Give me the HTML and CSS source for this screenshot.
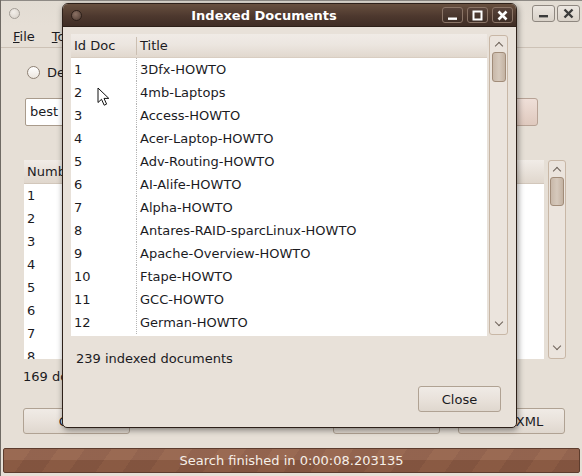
FILE: index.html
```html
<!DOCTYPE html>
<html>
<head>
<meta charset="utf-8">
<link rel="stylesheet" href="styles.css">
</head>
<body>
<div class="bgwin">
  <div class="bg-title">
    <span class="dot dot-light"></span>
    <span class="grow"></span>
    <span class="wbtn wbtn-light"><svg width="11" height="11" viewBox="0 0 11 11"><rect x="1" y="7" width="9" height="2.4" fill="#3b3b3b"/></svg></span>
    <span class="wbtn wbtn-light"><svg width="11" height="11" viewBox="0 0 11 11"><path d="M1.5 1.5 L9.5 9.5 M9.5 1.5 L1.5 9.5" stroke="#3b3b3b" stroke-width="2.4"/></svg></span>
  </div>
  <div class="menubar">
    <span><u>F</u>ile</span>
    <span><u>T</u>ools</span>
  </div>
  <div class="bg-content">
    <div class="radio-row"><span class="radio"></span><span>Default</span></div>
    <div class="entry-row">
      <div class="entry">best configuration</div>
      <div class="pbtn">Search</div>
    </div>
    <div class="bg-list">
      <div class="bg-list-main">
        <div class="bg-head">Number</div>
        <div class="bg-row">1</div>
        <div class="bg-row">2</div>
        <div class="bg-row">3</div>
        <div class="bg-row">4</div>
        <div class="bg-row">5</div>
        <div class="bg-row">6</div>
        <div class="bg-row">7</div>
        <div class="bg-row">8</div>
      </div>
      <div class="sb sb-bg">
        <span class="chev chev-up"></span>
        <span class="thumb thumb-bg"></span>
        <span class="grow"></span>
        <span class="chev chev-down"></span>
      </div>
    </div>
    <div class="bg-label">169 documents found</div>
    <div class="bg-buttons">
      <div class="btn btn-a">Close</div>
      <div class="btn btn-b">Show</div>
      <div class="btn btn-c">Save XML</div>
    </div>
  </div>
  <div class="statusbar">Search finished in 0:00:08.203135</div>

  <div class="dialog">
    <div class="d-title">
      <span class="dot dot-dark"></span>
      <span class="d-title-text">Indexed Documents</span>
      <span class="d-btns">
        <span class="wbtn wbtn-dark"><svg width="11" height="11" viewBox="0 0 11 11"><rect x="1" y="7.5" width="9" height="2.4" fill="#fff"/></svg></span>
        <span class="wbtn wbtn-dark"><svg width="11" height="11" viewBox="0 0 11 11"><rect x="1.5" y="1.5" width="8" height="8" fill="none" stroke="#fff" stroke-width="2"/></svg></span>
        <span class="wbtn wbtn-dark"><svg width="11" height="11" viewBox="0 0 11 11"><path d="M1.5 1.5 L9.5 9.5 M9.5 1.5 L1.5 9.5" stroke="#fff" stroke-width="2.6"/></svg></span>
      </span>
    </div>
    <div class="d-body">
      <div class="tree">
        <div class="tree-main">
          <div class="t-head">
            <div class="c-id">Id Doc</div>
            <div class="c-title">Title</div>
          </div>
          <div class="t-rows">
            <div class="t-row"><div class="c-id">1</div><div class="c-title">3Dfx-HOWTO</div></div>
            <div class="t-row"><div class="c-id">2</div><div class="c-title">4mb-Laptops</div></div>
            <div class="t-row"><div class="c-id">3</div><div class="c-title">Access-HOWTO</div></div>
            <div class="t-row"><div class="c-id">4</div><div class="c-title">Acer-Laptop-HOWTO</div></div>
            <div class="t-row"><div class="c-id">5</div><div class="c-title">Adv-Routing-HOWTO</div></div>
            <div class="t-row"><div class="c-id">6</div><div class="c-title">AI-Alife-HOWTO</div></div>
            <div class="t-row"><div class="c-id">7</div><div class="c-title">Alpha-HOWTO</div></div>
            <div class="t-row"><div class="c-id">8</div><div class="c-title">Antares-RAID-sparcLinux-HOWTO</div></div>
            <div class="t-row"><div class="c-id">9</div><div class="c-title">Apache-Overview-HOWTO</div></div>
            <div class="t-row"><div class="c-id">10</div><div class="c-title">Ftape-HOWTO</div></div>
            <div class="t-row"><div class="c-id">11</div><div class="c-title">GCC-HOWTO</div></div>
            <div class="t-row"><div class="c-id">12</div><div class="c-title">German-HOWTO</div></div>
          </div>
        </div>
        <div class="sb sb-d">
          <span class="chev chev-up"></span>
          <span class="thumb thumb-d"></span>
          <span class="grow"></span>
          <span class="chev chev-down"></span>
        </div>
      </div>
      <div class="d-label">239 indexed documents</div>
      <div class="d-actions"><div class="btn btn-close">Close</div></div>
    </div>
  </div>

  <svg class="cursor" width="14" height="20" viewBox="0 0 14 20"><path d="M1 1 L1 15.5 L4.5 12.3 L7.2 18.2 L9.6 17.1 L7 11.4 L11.8 11.4 Z" fill="#fff" stroke="#111" stroke-width="1" stroke-linejoin="round"/></svg>
</div>
</body>
</html>
```

FILE: styles.css
```css
* { box-sizing: border-box; }
html, body { margin: 0; padding: 0; }
body {
  width: 582px;
  height: 476px;
  overflow: hidden;
  font-family: "DejaVu Sans", "Noto Sans", sans-serif;
  font-size: 13px;
  color: #1b1b1f;
  background: #3a3a3a;
}
.grow { flex: 1; }

.bgwin {
  position: relative;
  width: 582px;
  height: 476px;
  background: #e6dfd6;
  border-left: 1px solid #6f6a64;
  display: flex;
  flex-direction: column;
}

.bg-title {
  height: 26px;
  display: flex;
  align-items: center;
  gap: 2px;
  padding: 0 2px 0 8px;
  background: linear-gradient(#e2dcd3, #e6dfd6);
  border-top: 1px solid #8e8a85;
}
.dot {
  width: 11px;
  height: 11px;
  border-radius: 50%;
  display: inline-block;
}
.dot-light {
  border: 1px solid #a39d96;
  background: radial-gradient(circle at 40% 35%, #f2eee9, #d6cfc6);
}
.dot-dark {
  border: 1px solid #2d201a;
  background: radial-gradient(circle at 40% 35%, #8b7164, #4d3a31);
}
.wbtn {
  width: 23px;
  height: 17px;
  border-radius: 3px;
  display: flex;
  align-items: center;
  justify-content: center;
}
.wbtn-light {
  border: 1px solid #8e8780;
  background: linear-gradient(#ece7e1, #d9d2c9);
}
.wbtn-dark {
  width: 21px;
  height: 16px;
  border: 1px solid #8a7466;
  background: linear-gradient(#58433a, #3f2e26);
}

.menubar {
  height: 22px;
  display: flex;
  align-items: center;
  gap: 17px;
  padding-left: 12px;
  border-bottom: 1px solid #cdc2b6;
}

.bg-content {
  flex: 1;
  display: flex;
  flex-direction: column;
  padding: 0 16px 0 22px;
}
.radio-row {
  margin-top: 15px;
  height: 18px;
  display: flex;
  align-items: center;
  gap: 7px;
  padding-left: 4px;
}
.radio {
  width: 13px;
  height: 13px;
  border-radius: 50%;
  border: 1px solid #8e8174;
  background: linear-gradient(#ffffff, #ece6df);
}
.entry-row {
  margin-top: 17px;
  height: 28px;
  display: flex;
  gap: 8px;
  padding-left: 2px;
}
.entry {
  flex: 1;
  background: #fff;
  border: 1px solid #a99b8c;
  border-radius: 2px;
  padding: 5px 4px;
}
.pbtn {
  width: 98px;
  margin-right: 28px;
  border: 1px solid #b7a295;
  border-radius: 3px;
  background: linear-gradient(#efdfd8, #dfc9be);
  display: flex;
  align-items: center;
  justify-content: center;
}

.bg-list {
  margin-top: 34px;
  height: 199px;
  display: flex;
  gap: 4px;
  padding-left: 1px;
}
.bg-list-main {
  flex: 1;
  background: #fff;
  overflow: hidden;
  margin-right: 0;
}
.bg-head {
  height: 24px;
  padding: 4px 3px;
  background: linear-gradient(#f1ece7, #e0d7cd);
  border-bottom: 1px solid #d2c7bb;
}
.bg-row {
  height: 23px;
  padding: 4px 3px;
}
.sb {
  display: flex;
  flex-direction: column;
  align-items: center;
  border: 1px solid #c8b7a6;
  border-radius: 3px;
  background: #ebe4dd;
}
.sb-bg {
  width: 18px;
  margin-right: 0;
}
.chev {
  width: 6px;
  height: 6px;
  border-left: 1px solid #6d6259;
  border-top: 1px solid #6d6259;
}
.chev-up { transform: rotate(45deg); margin-top: 7px; }
.chev-down { transform: rotate(225deg); margin-bottom: 9px; }
.thumb {
  width: 14px;
  height: 29px;
  margin-top: 3px;
  border: 1px solid #a18c79;
  border-radius: 3px;
  background: linear-gradient(90deg, #c8b8a9, #d6c9bc 50%, #c3b2a2);
}

.bg-label {
  margin-top: 9px;
  height: 18px;
  line-height: 18px;
}
.bg-buttons {
  margin-top: 22px;
  height: 26px;
  display: flex;
}
.btn {
  height: 26px;
  border: 1px solid #b0a293;
  border-radius: 3px;
  background: linear-gradient(#f0ebe6 0%, #e9e2db 50%, #dfd7ce 100%);
  display: flex;
  align-items: center;
  justify-content: center;
}
.btn-a { width: 107px; }
.btn-b { width: 107px; margin-left: 203px; }
.btn-c { width: 107px; margin-left: 18px; }

.statusbar {
  height: 25px;
  margin: 0 2px 3px 2px;
  border: 1px solid #5d3c2d;
  border-radius: 2px;
  color: #f6efe8;
  display: flex;
  align-items: center;
  justify-content: center;
  background:
    linear-gradient(rgba(255,255,255,0.06) 0 50%, rgba(0,0,0,0.07) 50% 100%),
    repeating-linear-gradient(-55deg, #8c5a44 0 22px, #946148 22px 44px);
}

.dialog {
  position: absolute;
  left: 61px;
  top: 3px;
  width: 455px;
  height: 425px;
  border: 1px solid #2d2019;
  border-radius: 6px 6px 5px 5px;
  background: #e8e1d9;
  box-shadow: 1px 2px 6px rgba(0,0,0,0.45);
  display: flex;
  flex-direction: column;
  overflow: hidden;
}
.d-title {
  height: 23px;
  display: flex;
  align-items: center;
  padding: 0 3px 0 8px;
  background: linear-gradient(#68503f, #4d382e 55%, #3f2d25);
  border-bottom: 1px solid #2d2019;
}
.d-title-text {
  flex: 1;
  text-align: center;
  color: #fff;
  font-weight: bold;
  padding-left: 4px;
  padding-right: 0;
}
.d-btns {
  display: flex;
  gap: 4px;
}

.d-body {
  flex: 1;
  display: flex;
  flex-direction: column;
  padding: 7px 8px 15px 8px;
}
.tree {
  height: 302px;
  display: flex;
  background: #e8e1d9;
}
.tree-main {
  width: 417px;
  background: #fff;
  display: flex;
  flex-direction: column;
}
.t-head {
  height: 24px;
  display: flex;
  align-items: center;
  background: linear-gradient(#f0ebe6, #ece6e0 45%, #e1d8ce);
  border-bottom: 1px solid #d8cdc1;
}
.t-head .c-title {
  border-left: 1px solid #cbbfb2;
  height: 18px;
  line-height: 18px;
}
.c-id {
  width: 65px;
  padding-left: 3px;
}
.c-title {
  flex: 1;
  padding-left: 3px;
}
.t-row {
  height: 23px;
  display: flex;
  align-items: center;
}
.t-row .c-title {
  height: 23px;
  line-height: 23px;
  border-left: 1px dotted #b5b5b5;
}
.sb-d {
  width: 19px;
  margin-left: 2px;
  margin-top: 1px;
  height: 300px;
}
.thumb-d {
  height: 30px;
}
.d-label {
  margin-top: 14px;
  padding-left: 5px;
  height: 18px;
  line-height: 18px;
}
.d-actions {
  margin-top: auto;
  display: flex;
  justify-content: flex-end;
  padding-right: 7px;
}
.btn-close { width: 83px; }

.cursor {
  position: absolute;
  left: 96px;
  top: 87px;
}
```
